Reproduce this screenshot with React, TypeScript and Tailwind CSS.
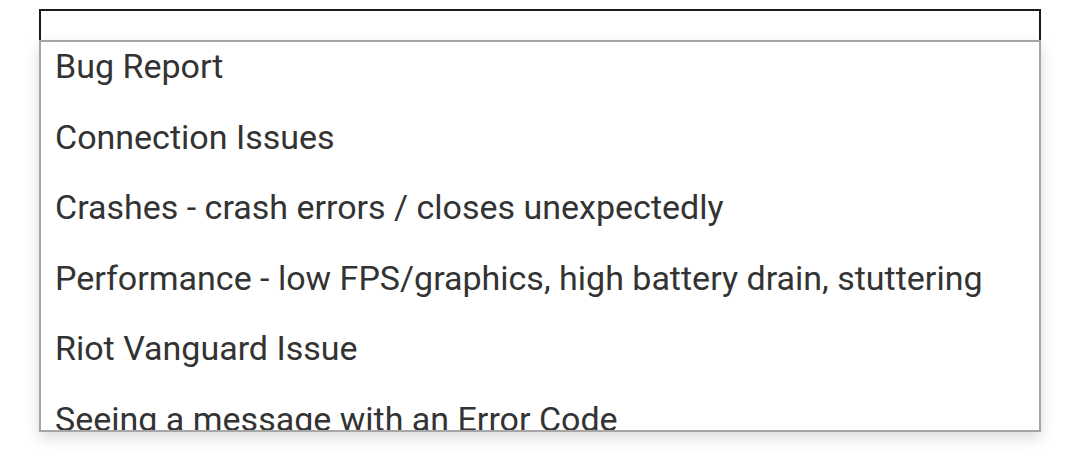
const options = [
  'Bug Report',
  'Connection Issues',
  'Crashes - crash errors / closes unexpectedly',
  'Performance - low FPS/graphics, high battery drain, stuttering',
  'Riot Vanguard Issue',
  'Seeing a message with an Error Code',
  'Something else',
];

export default function App() {
  return (
    <div className="min-h-[470px] w-full bg-white pt-[9px] pl-[39px]" style={{ fontFamily: 'Roboto, "Noto Sans", sans-serif' }}>
      <div className="w-[1002px]">
        {/* closed select field */}
        <div className="h-[31px] border-2 border-b-0 border-[#1c1c1c] bg-white" />

        {/* open option list */}
        <div className="h-[392px] overflow-hidden border-2 border-[#a6a6a6] bg-white shadow-[0_6px_14px_rgba(0,0,0,0.14)]">
          <ul className="-mt-[11px]">
            {options.map((label) => (
              <li key={label} className="px-[14px] py-[15px] text-[34px] leading-[40.5px] text-[#333333] whitespace-nowrap">
                {label}
              </li>
            ))}
          </ul>
        </div>
      </div>
    </div>
  );
}
